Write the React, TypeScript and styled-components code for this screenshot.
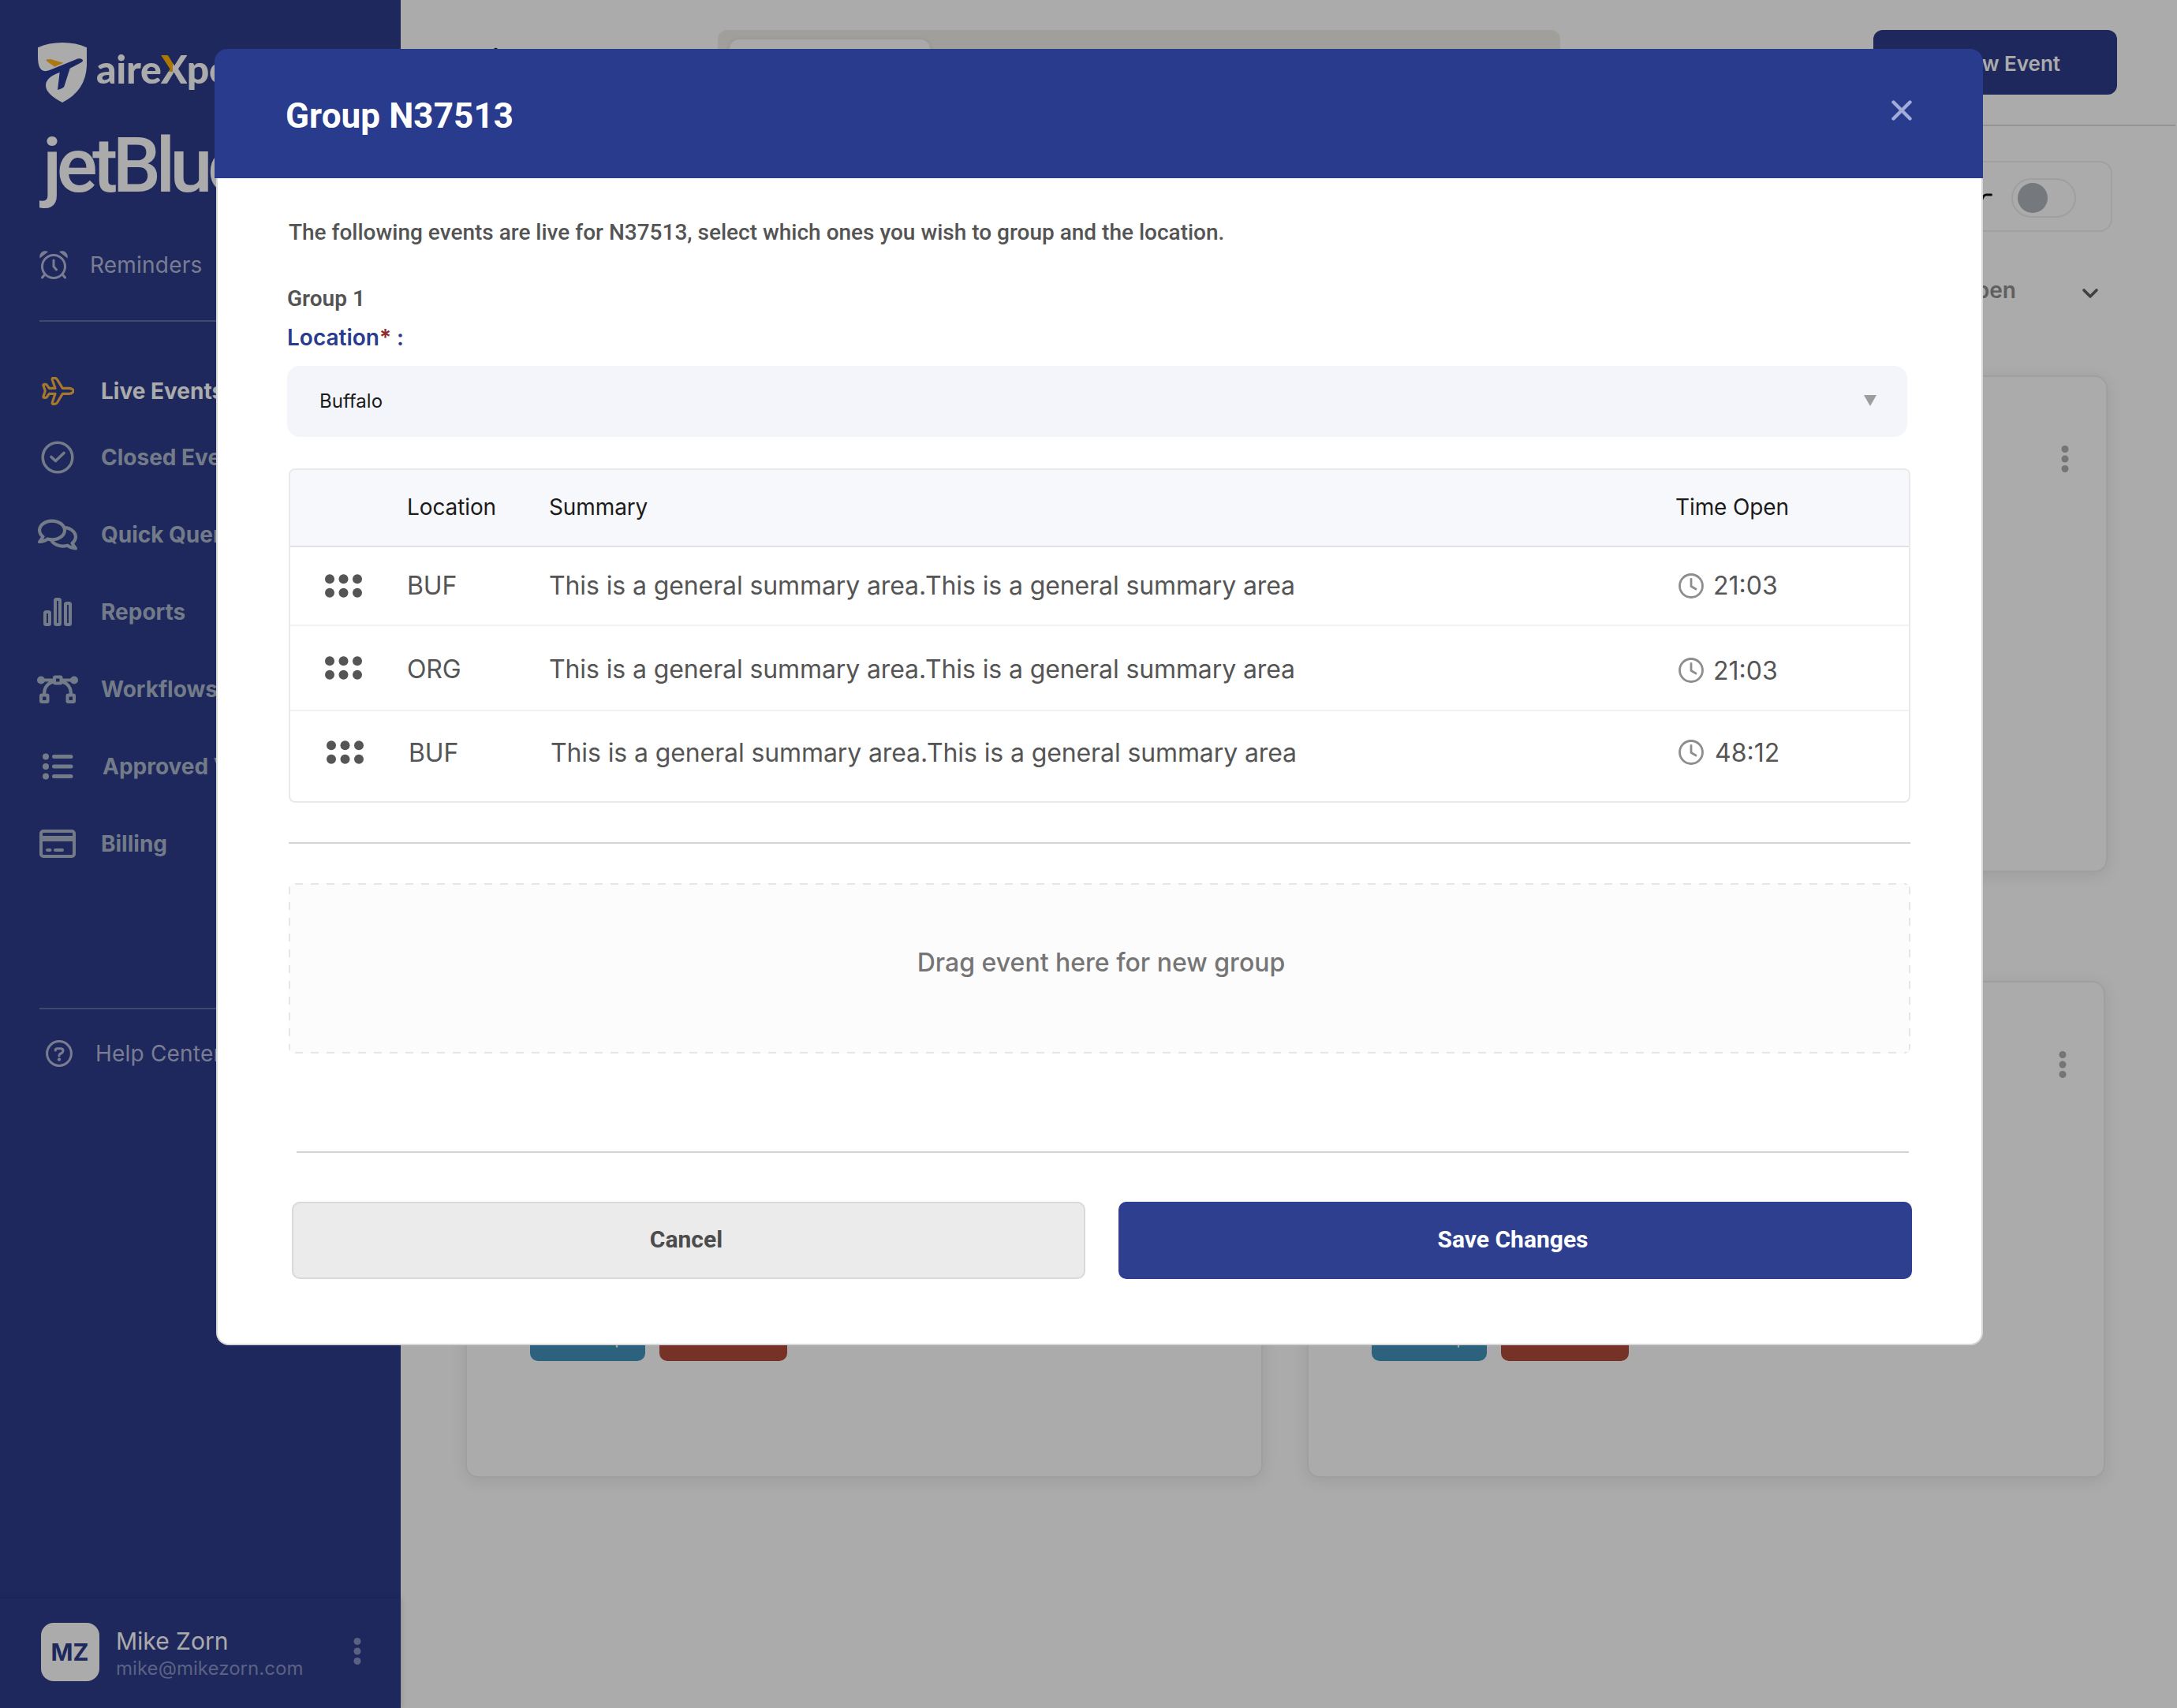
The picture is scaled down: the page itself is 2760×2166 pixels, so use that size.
import React from 'react';
import styled, { createGlobalStyle } from 'styled-components';
import { FaRegComments } from 'react-icons/fa';

const GlobalStyle = createGlobalStyle`
  * {
    box-sizing: border-box;
  }

  body {
    margin: 0;
    background: #fff;
    font-family: Inter, sans-serif;
  }
`;

const Page = styled.div`
  position: relative;
  display: grid;
  grid-template-columns: 508px 1fr;
  width: 2760px;
  height: 2166px;
  overflow: hidden;
`;

/* Sidebar */

const Sidebar = styled.aside`
  display: flex;
  flex-direction: column;
  background: #2d3c8b;
`;

const Brand = styled.div`
  display: flex;
  align-items: center;
  gap: 12px;
  height: 76px;
  margin: 54px 0 0 48px;
`;

const BrandName = styled.span`
  margin-bottom: 11px;
  color: #fff;
  font-family: Lato, sans-serif;
  font-size: 50px;
  font-weight: 900;
  line-height: 60px;
  letter-spacing: -0.3px;
`;

const BrandX = styled.span`
  color: transparent;
  background: conic-gradient(from 270deg at 44% 56%, #ffb300 0 90deg, #fff 0);
  background-clip: text;
  -webkit-background-clip: text;
`;

const Airline = styled.div`
  height: 97px;
  margin: 32px 0 0 54px;
  color: #fff;
  font-family: Roboto, sans-serif;
  font-size: 97px;
  font-weight: 500;
  line-height: 97px;
  letter-spacing: -6.6px;
`;

const SideLink = styled.a<{ $top: number; $left: number; $gap: number }>`
  display: flex;
  align-items: center;
  gap: ${({ $gap }) => $gap}px;
  height: 60px;
  margin: ${({ $top, $left }) => `${$top}px 0 0 ${$left}px`};
  color: #b6bbda;
  font-size: 28px;
  letter-spacing: 0.2px;
`;

const SideDivider = styled.div<{ $top: number }>`
  width: 408px;
  height: 2px;
  margin: ${({ $top }) => $top}px 0 0 50px;
  background: #606da7;
`;

const Nav = styled.nav`
  margin-top: 53px;
`;

const NavItem = styled.a<{ $active?: boolean; $indent?: number }>`
  display: flex;
  align-items: center;
  gap: ${({ $indent = 0 }) => 28 + $indent}px;
  height: ${({ $active }) => ($active ? 70 : 98)}px;
  padding-left: 46px;
  color: ${({ $active }) => ($active ? '#fff' : '#acb8cc')};
  font-size: 28px;
  font-weight: 700;
`;

const NavIcon = styled.span`
  display: flex;
  flex: none;
  align-items: center;
  justify-content: center;
  width: 54px;
`;

const UserBar = styled.div`
  display: flex;
  align-items: center;
  height: 139px;
  margin-top: auto;
  padding: 0 50px 3px 52px;
  background: #2d3c8b;
  box-shadow: 0 0 7px rgba(0, 0, 0, 0.2);
`;

const Avatar = styled.div`
  display: flex;
  align-items: center;
  justify-content: center;
  width: 74px;
  height: 74px;
  padding-right: 1px;
  border-radius: 16px;
  background: #fff;
  color: #2d3c8b;
  font-size: 30px;
  font-weight: 700;
`;

const UserInfo = styled.div`
  flex: 1;
  margin: 6px 0 0 21px;
`;

const UserName = styled.div`
  color: #fff;
  font-size: 30px;
  line-height: 36px;
`;

const UserEmail = styled.div`
  color: #8891c2;
  font-size: 24px;
  line-height: 34px;
  letter-spacing: 0.05px;
`;

const UserMenu = styled.div`
  margin-bottom: 2px;
  color: #8891c2;
`;

/* Main area */

const Main = styled.main`
  display: flex;
  flex-direction: column;
`;

const TopBar = styled.header`
  display: flex;
  align-items: flex-start;
  height: 160px;
  margin-right: 2px;
  padding: 38px 74px 0 94px;
  border-bottom: 2px solid #dddddd;
`;

const PageTitle = styled.h1`
  width: 308px;
  margin: 15px 0 0;
  color: #222;
  font-size: 38px;
  font-weight: 600;
  line-height: 46px;
`;

const SearchBar = styled.div`
  width: 1068px;
  height: 82px;
  padding: 12px 15px;
  border-radius: 12px;
  background: #f0ede9;
`;

const SearchTab = styled.div`
  width: 254px;
  height: 58px;
  border-radius: 12px;
  background: #fdfdfd;
  box-shadow: 0 0 6px rgba(0, 0, 0, 0.08);
`;

const NewEventButton = styled.button`
  width: 309px;
  height: 82px;
  margin-left: auto;
  padding: 2px 72px 0 0;
  border: 0;
  border-radius: 12px;
  background: #2d3c8b;
  color: #fff;
  font-family: inherit;
  font-size: 26px;
  font-weight: 600;
  text-align: right;
`;

const FilterBox = styled.div`
  display: flex;
  align-items: center;
  justify-content: flex-end;
  align-self: flex-end;
  gap: 24px;
  width: 420px;
  height: 90px;
  margin: 44px 82px 0 0;
  padding: 4px 44px 0 0;
  border: 2px solid #efefef;
  border-radius: 16px;
`;

const Toggle = styled.div`
  width: 82px;
  height: 50px;
  padding: 4px 6px;
  border: 2px solid #ededed;
  border-radius: 25px;

  &::before {
    content: '';
    display: block;
    width: 38px;
    height: 38px;
    border-radius: 50%;
    background: #afb5bc;
  }
`;

const SortBy = styled.div`
  display: flex;
  align-items: center;
  align-self: flex-end;
  gap: 83px;
  height: 60px;
  margin: 44px 99px 78px 0;
  color: #8e8e8e;
  font-size: 28px;
  font-weight: 600;

  svg {
    margin-top: 8px;
  }
`;

const CardGrid = styled.div<{ $offset: number }>`
  display: grid;
  grid-template-columns: 1011px 1012px;
  gap: 56px;
  margin: 0 0 138px ${({ $offset }) => 82 + $offset}px;
`;

const Card = styled.section`
  display: flex;
  flex-direction: column;
  justify-content: space-between;
  height: 630px;
  padding: 86px 47px 146px 80px;
  border: 2px solid #ededed;
  border-radius: 16px;
  box-shadow: 0 4px 20px rgba(0, 0, 0, 0.09);
`;

const CardMenu = styled.div`
  align-self: flex-end;
  color: #afafaf;
`;

const Badges = styled.div`
  display: flex;
  gap: 18px;
`;

const Badge = styled.span<{ $color: string; $width: number }>`
  display: flex;
  align-items: center;
  justify-content: center;
  width: ${({ $width }) => $width}px;
  height: 56px;
  border-radius: 10px;
  background: ${({ $color }) => $color};
  color: #fff;
  font-size: 20px;
`;

/* Modal */

const Backdrop = styled.div`
  position: absolute;
  inset: 0;
  padding: 62px 0 0 272px;
  background: rgba(0, 0, 0, 0.33);
`;

const Modal = styled.div`
  width: 2242px;
`;

const ModalHeader = styled.div`
  display: flex;
  align-items: center;
  justify-content: space-between;
  height: 164px;
  padding: 4px 90px 0 90px;
  border-radius: 16px 16px 0 0;
  background: #293b8d;
`;

const ModalTitle = styled.h2`
  margin: 2px 0 0;
  color: #fff;
  font-family: Roboto, sans-serif;
  font-size: 44px;
  font-weight: 700;
  letter-spacing: 0.1px;
`;

const CloseIcon = styled.svg`
  margin-top: -12px;
`;

const ModalBody = styled.div`
  height: 1480px;
  margin-left: 2px;
  padding: 49px 88px 0;
  border: 2px solid #d8d8d8;
  border-top: 0;
  border-radius: 0 0 16px 16px;
  background: #fff;
`;

const Intro = styled.p`
  margin: 0 0 0 2px;
  color: #545454;
  font-family: Roboto, sans-serif;
  font-size: 28px;
  font-weight: 500;
  line-height: 40px;
`;

const GroupName = styled.div`
  margin-top: 44px;
  color: #545454;
  font-family: Roboto, sans-serif;
  font-size: 28px;
  font-weight: 600;
  line-height: 40px;
`;

const FieldLabel = styled.label`
  display: block;
  margin-top: 9px;
  color: #293b8d;
  font-size: 28px;
  font-weight: 600;
  line-height: 40px;
`;

const Required = styled.span`
  color: #8f2a2a;
`;

const Select = styled.div`
  display: flex;
  align-items: center;
  justify-content: space-between;
  width: 2054px;
  height: 90px;
  margin-top: 16px;
  padding: 0 39px 2px 41px;
  border-radius: 16px;
  background: #f3f5fa;
  color: #1b1b1b;
  font-size: 24px;
`;

const Table = styled.div`
  width: 2056px;
  height: 424px;
  margin: 40px 0 0 2px;
  border: 2px solid #e9e9eb;
  border-radius: 8px;
  overflow: hidden;
`;

const TableRow = styled.div<{ $height: number; $shift?: number }>`
  display: grid;
  grid-template-columns: 104px 180px 1428px 1fr;
  align-items: center;
  height: ${({ $height }) => $height}px;
  padding-left: ${({ $shift = 0 }) => 44 + $shift}px;
  border-bottom: 2px solid #f2f2f2;
  color: #555;
  font-size: 32px;

  &:last-child {
    border-bottom: 0;
    padding-bottom: 10px;
  }
`;

const TableHead = styled(TableRow)`
  padding-bottom: 3px;
  border-color: #e2e2e4;
  background: #f7f8fb;
  color: #1b1b1b;
  font-size: 28px;
`;

const TextCell = styled.span<{ $drop?: number }>`
  margin-top: ${({ $drop = 0 }) => $drop * 2}px;
  letter-spacing: -0.11px;
`;

const TimeCell = styled.div<{ $shift?: number; $drop?: number }>`
  display: flex;
  align-items: center;
  gap: ${({ $shift = 0 }) => 12 + $shift}px;
  margin-top: ${({ $drop = 0 }) => $drop * 2}px;
  margin-left: ${({ $shift = 0 }) => 4 - $shift}px;
`;

const Rule = styled.div<{ $top: number; $left: number; $width: number }>`
  width: ${({ $width }) => $width}px;
  height: 2px;
  margin: ${({ $top, $left }) => `${$top}px 0 0 ${$left}px`};
  background: #d4d4d4;
`;

/* 10px dashes with 10px gaps on each side */
const DropZone = styled.div`
  display: flex;
  align-items: center;
  justify-content: center;
  width: 2056px;
  height: 216px;
  margin: 50px 0 0 2px;
  padding: 0 0 15px 4px;
  border-radius: 8px;
  background:
    repeating-linear-gradient(90deg, #e6e6e6 0 10px, transparent 10px 20px) 8px 0 / 100% 2px no-repeat,
    repeating-linear-gradient(90deg, #e6e6e6 0 10px, transparent 10px 20px) 8px 100% / 100% 2px no-repeat,
    repeating-linear-gradient(#e6e6e6 0 10px, transparent 10px 20px) 0 4px / 2px 100% no-repeat,
    repeating-linear-gradient(#e6e6e6 0 10px, transparent 10px 20px) 100% 4px / 2px 100% no-repeat,
    #fcfcfc;
  color: #757575;
  font-size: 32px;
  font-weight: 500;
`;

const Actions = styled.div`
  display: grid;
  grid-template-columns: 1006px 1006px;
  gap: 42px;
  margin: 62px 0 0 6px;
`;

const Button = styled.button<{ $primary?: boolean }>`
  height: 98px;
  padding: 0 6px 4px 0;
  border: 2px solid ${({ $primary }) => ($primary ? '#2e3f8f' : '#d9d9d9')};
  border-radius: 10px;
  background: ${({ $primary }) => ($primary ? '#2e3f8f' : '#ebebeb')};
  color: ${({ $primary }) => ($primary ? '#fff' : '#4c4c4c')};
  font-family: Roboto, sans-serif;
  font-size: 30px;
  font-weight: 700;
`;

/* Icons */

const ShieldLogo = () => (
  <svg width="62" height="76" viewBox="54 54 186 228">
    <path d="M60 150L222 112L180 160L150 240L84 220Q66 200 60 150Z" fill="#283a96" />
    <path
      d="M54 73Q95 54 147 54Q200 54 240 73V142Q236 238 147 282Q84 250 84 217Q84 186 137 167L129 234Q150 228 154 221L176 152L219 130Q228 123 224 119Q214 111 196 119L100 158Q54 178 54 108Z"
      fill="#fff"
    />
    <path d="M85 120Q92 115 105 118L151 131L118 146L89 126Z" fill="#ffb31a" />
  </svg>
);

const AlarmIcon = () => (
  <svg width="36" height="36" viewBox="0 0 36 36" fill="none" stroke="currentColor" strokeWidth="3" strokeLinecap="round">
    <circle cx="18" cy="20" r="14.5" />
    <path d="M18 12V20L21.5 24M6 31L3.5 34M30 31L32.5 34" />
    <path d="M0.5 9.5C-1 2 6-1.5 11 1.2ZM35.5 9.5C37 2 30-1.5 25 1.2Z" fill="currentColor" stroke="none" />
  </svg>
);

const PlaneIcon = () => (
  <svg width="42" height="37" viewBox="157 108 126 111" fill="none" stroke="#f6b340" strokeWidth="9.5" strokeLinejoin="round">
    <path d="M239 151H262C274 151 280 157 280 161C280 166 274 172 262 172H239L219 205Q215 211 209 211H204Q198 211 200 205L211 172H188L180 183Q178 187 174 187H170Q165 187 166 182L173 161L166 141Q165 136 170 136H174Q178 136 180 140L188 151H211L200 119Q198 112 204 112H209Q215 112 219 119Z" />
  </svg>
);

const CheckCircleIcon = () => (
  <svg width="42" height="42" viewBox="0 0 42 42" fill="none" stroke="currentColor" strokeWidth="3.6" strokeLinecap="round" strokeLinejoin="round">
    <circle cx="21" cy="21" r="18.8" />
    <path d="M13 20.5L18.5 25.5L29 15.5" />
  </svg>
);

const BarsIcon = () => (
  <svg width="36" height="36" viewBox="0 0 36 36" fill="none" stroke="currentColor" strokeWidth="4">
    <rect x="2" y="18" width="6" height="16" rx="1.5" />
    <rect x="15" y="2" width="6" height="32" rx="1.5" />
    <rect x="28" y="7" width="6" height="27" rx="1.5" />
  </svg>
);

const WorkflowIcon = () => (
  <svg width="52" height="36" viewBox="0 0 52 36" fill="none" stroke="currentColor" strokeWidth="4">
    <circle cx="5" cy="6.5" r="5" fill="currentColor" stroke="none" />
    <circle cx="47" cy="6.5" r="5" fill="currentColor" stroke="none" />
    <path d="M5 6.5H21M31 6.5H47M20 8.5C13 11 9 16 9 24M32 8.5C39 11 43 16 43 24" />
    <rect x="22" y="2.5" width="8.5" height="8" rx="1" />
    <rect x="5" y="25.5" width="8.5" height="8.5" rx="1" />
    <rect x="38.5" y="25.5" width="8.5" height="8.5" rx="1" />
  </svg>
);

const ListIcon = () => (
  <svg width="40" height="34" viewBox="-0.5 0 40 34" fill="currentColor" stroke="currentColor" strokeWidth="5" strokeLinecap="round">
    {[4.5, 17, 29.5].map((y) => (
      <g key={y}>
        <circle cx="4.5" cy={y} r="4" stroke="none" />
        <path d={`M15 ${y}H36.5`} />
      </g>
    ))}
  </svg>
);

const CardIcon = () => (
  <svg width="46" height="36" viewBox="0 0 46 36" fill="none" stroke="currentColor" strokeWidth="4">
    <rect x="2" y="2" width="42" height="32" rx="3" />
    <path d="M2 11.5H44" strokeWidth="7" />
    <path d="M10 26H13.5M20 26H29" strokeLinecap="round" />
  </svg>
);

const HelpIcon = () => (
  <svg width="34" height="34" viewBox="0 0 34 34" fill="none" stroke="currentColor" strokeWidth="3" strokeLinecap="round">
    <circle cx="17" cy="17" r="15.4" />
    <path d="M12.3 13V12.3Q12.5 10.7 14.5 10.7H18.5Q22 10.7 22 13.6Q22 15.6 20 16.6L18 17.6Q17 18.2 17 20" />
    <circle cx="17" cy="24.6" r="2.2" fill="currentColor" stroke="none" />
  </svg>
);

const DotsIcon = () => (
  <svg width="10" height="36" viewBox="0 0 10 36" fill="currentColor" display="block">
    <circle cx="5" cy="5.5" r="4.5" />
    <circle cx="5" cy="18" r="4.5" />
    <circle cx="5" cy="30.5" r="4.5" />
  </svg>
);

const DragHandle = () => (
  <svg width="47" height="30" viewBox="0 0 47 30" fill="#555">
    {[6, 23.5, 41].map((x) => (
      <g key={x}>
        <circle cx={x} cy="6.3" r="6" />
        <circle cx={x} cy="23.7" r="6" />
      </g>
    ))}
  </svg>
);

const ClockIcon = () => (
  <svg width="32" height="32" viewBox="0 0 32 32" fill="none" stroke="#8e8e8e" strokeWidth="2.8" strokeLinecap="round" strokeLinejoin="round">
    <circle cx="16" cy="16" r="14.5" />
    <path d="M16 7.5V16.5L22 20" />
  </svg>
);

const navItems = [
  { label: 'Live Events', icon: <PlaneIcon />, active: true },
  { label: 'Closed Events', icon: <CheckCircleIcon /> },
  { label: 'Quick Queries', icon: <FaRegComments size={50} /> },
  { label: 'Reports', icon: <BarsIcon /> },
  { label: 'Workflows', icon: <WorkflowIcon /> },
  { label: 'Approved Vendors', icon: <ListIcon />, indent: 2 },
  { label: 'Billing', icon: <CardIcon /> },
];

const summary = 'This is a general summary area.This is a general summary area';

const events = [
  { id: 1, location: 'BUF', time: '21:03', height: 100, shift: 0, textDrop: -0.5, timeDrop: -0.5 },
  { id: 2, location: 'ORG', time: '21:03', height: 108, shift: 0, textDrop: 1, timeDrop: 3 },
  { id: 3, location: 'BUF', time: '48:12', height: 114, shift: 2, textDrop: 0.5, timeDrop: 0 },
];

const EventCard = ({ badges }: { badges?: boolean }) => (
  <Card>
    <CardMenu>
      <DotsIcon />
    </CardMenu>
    {badges && (
      <Badges>
        <Badge $color="#4392bc" $width={146}>Follow Up</Badge>
        <Badge $color="#b24b3c" $width={162}>Escalated</Badge>
      </Badges>
    )}
  </Card>
);

function App() {
  return (
    <Page>
      <GlobalStyle />
      <Sidebar>
        <Brand>
          <ShieldLogo />
          <BrandName>
            aire<BrandX>X</BrandX>pert
          </BrandName>
        </Brand>
        <Airline>jetBlue</Airline>
        <SideLink $top={47} $left={50} $gap={28}>
          <AlarmIcon />
          Reminders
        </SideLink>
        <SideDivider $top={40} />
        <Nav>
          {navItems.map((item) => (
            <NavItem key={item.label} $active={item.active} $indent={item.indent}>
              <NavIcon>{item.icon}</NavIcon>
              {item.label}
            </NavItem>
          ))}
        </Nav>
        <SideDivider $top={159} />
        <SideLink $top={26} $left={58} $gap={29}>
          <HelpIcon />
          Help Center
        </SideLink>
        <UserBar>
          <Avatar>MZ</Avatar>
          <UserInfo>
            <UserName>Mike Zorn</UserName>
            <UserEmail>mike@mikezorn.com</UserEmail>
          </UserInfo>
          <UserMenu>
            <DotsIcon />
          </UserMenu>
        </UserBar>
      </Sidebar>

      <Main>
        <TopBar>
          <PageTitle>Live Events</PageTitle>
          <SearchBar>
            <SearchTab />
          </SearchBar>
          <NewEventButton>+ New Event</NewEventButton>
        </TopBar>
        <FilterBox>
          <svg width="20" height="14" viewBox="0 0 20 14" fill="none" stroke="#111" strokeWidth="3" strokeLinecap="round">
            <path d="M6 12Q8 3 12 3H18.5" />
          </svg>
          <Toggle />
        </FilterBox>
        <SortBy>
          Time Open
          <svg width="22" height="14" viewBox="0 0 22 14" fill="none" stroke="#606060" strokeWidth="3.6" strokeLinecap="round" strokeLinejoin="round">
            <path d="M3 3L11 11L19 3" />
          </svg>
        </SortBy>
        <CardGrid $offset={3}>
          <EventCard />
          <EventCard />
        </CardGrid>
        <CardGrid $offset={0}>
          <EventCard badges />
          <EventCard badges />
        </CardGrid>
      </Main>

      <Backdrop>
        <Modal>
          <ModalHeader>
            <ModalTitle>Group N37513</ModalTitle>
            <CloseIcon width="26" height="26" viewBox="0 0 26 26" stroke="#a3abd9" strokeWidth="4.4" strokeLinecap="round">
              <path d="M2.5 2.5L23.5 23.5M23.5 2.5L2.5 23.5" />
            </CloseIcon>
          </ModalHeader>
          <ModalBody>
            <Intro>
              The following events are live for N37513, select which ones you wish to group and the location.
            </Intro>
            <GroupName>Group 1</GroupName>
            <FieldLabel>
              Location<Required>*</Required> :
            </FieldLabel>
            <Select>
              Buffalo
              <svg width="16" height="14" viewBox="0 0 16 14" fill="#9d9d9d">
                <path d="M0 0H16L8 14Z" />
              </svg>
            </Select>
            <Table>
              <TableHead $height={98}>
                <span />
                <TextCell>Location</TextCell>
                <TextCell>Summary</TextCell>
                <TextCell>Time Open</TextCell>
              </TableHead>
              {events.map((event) => (
                <TableRow key={event.id} $height={event.height} $shift={event.shift}>
                  <DragHandle />
                  <TextCell $drop={event.textDrop}>{event.location}</TextCell>
                  <TextCell $drop={event.textDrop}>{summary}</TextCell>
                  <TimeCell $shift={event.shift} $drop={event.timeDrop}>
                    <ClockIcon />
                    {event.time}
                  </TimeCell>
                </TableRow>
              ))}
            </Table>
            <Rule $top={50} $left={2} $width={2056} />
            <DropZone>Drag event here for new group</DropZone>
            <Rule $top={124} $left={12} $width={2044} />
            <Actions>
              <Button>Cancel</Button>
              <Button $primary>Save Changes</Button>
            </Actions>
          </ModalBody>
        </Modal>
      </Backdrop>
    </Page>
  );
}

export default App;
